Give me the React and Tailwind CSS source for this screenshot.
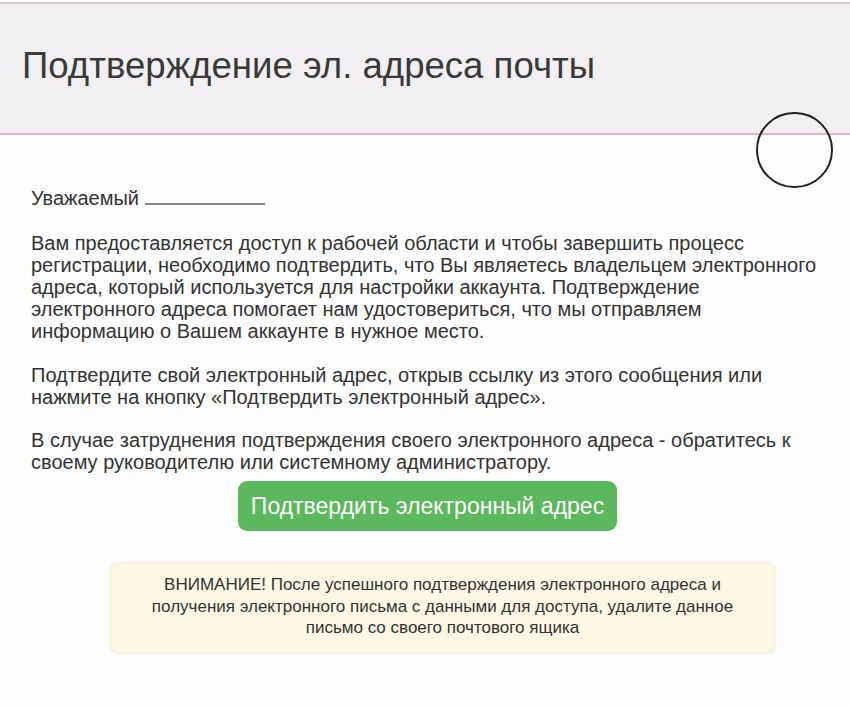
export default function App() {
  return (
    <div className="relative w-[850px] h-[706px] overflow-hidden bg-[#fdfdfd] text-[#333]" style={{ fontFamily: '"Liberation Sans", Arial, sans-serif' }}>
      <header className="h-[133px] bg-[#f1eff1] border-t-[2px] border-b-[2px] border-t-[#dcc6d2] border-b-[#dcb6c6] mt-[2px] flex items-center px-[22px]">
        <h1 className="text-[36.6px] leading-none text-[#3a3a3a] -mt-[4px]">Подтверждение эл. адреса почты</h1>
      </header>

      <div className="absolute left-[756px] top-[112px] w-[77px] h-[76px] rounded-full border-[2px] border-[#222]"></div>

      <main className="px-[31px] pt-[52px] text-[20px] leading-[22px]">
        <p className="flex items-end">
          Уважаемый
          <span className="inline-block ml-[6px] mb-[4px] w-[120px] h-[2px] bg-[#858585]"></span>
        </p>
        <p className="mt-[23px]">
          Вам предоставляется доступ к рабочей области и чтобы завершить процесс<br />
          регистрации, необходимо подтвердить, что Вы являетесь владельцем электронного<br />
          адреса, который используется для настройки аккаунта. Подтверждение<br />
          электронного адреса помогает нам удостовериться, что мы отправляем<br />
          информацию о Вашем аккаунте в нужное место.
        </p>
        <p className="mt-[22px]">
          Подтвердите свой электронный адрес, открыв ссылку из этого сообщения или<br />
          нажмите на кнопку «Подтвердить электронный адрес».
        </p>
        <p className="mt-[21px]">
          В случае затруднения подтверждения своего электронного адреса - обратитесь к<br />
          своему руководителю или системному администратору.
        </p>
        <div className="flex justify-center pl-[5px] mt-[8px]">
          <button className="w-[379px] h-[50px] rounded-[9px] bg-[#5cb85c] text-white text-[23px] leading-none">
            Подтвердить электронный адрес
          </button>
        </div>
      </main>

      <div className="mx-[110px] mt-[31px] w-[665px] rounded-[8px] bg-[#fcf8e3] border border-[#f8f0d6] shadow-[0_1px_3px_rgba(200,190,150,0.25)] pt-[11px] pb-[13px] text-center text-[17px] leading-[21.5px] text-[#333]">
        ВНИМАНИЕ! После успешного подтверждения электронного адреса и<br />
        получения электронного письма с данными для доступа, удалите данное<br />
        письмо со своего почтового ящика
      </div>
    </div>
  );
}
